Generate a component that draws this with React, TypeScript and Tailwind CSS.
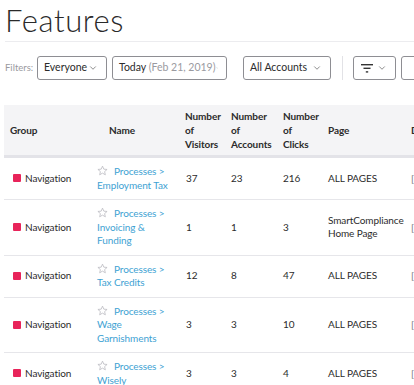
import React from 'react';
import { ChevronDown } from 'lucide-react';

type Row = {
  name: string[];
  visitors: string;
  accounts: string;
  clicks: string;
  page: string[];
};

const rows: Row[] = [
  { name: ['Employment Tax'], visitors: '37', accounts: '23', clicks: '216', page: ['ALL PAGES'] },
  { name: ['Invoicing &', 'Funding'], visitors: '1', accounts: '1', clicks: '3', page: ['SmartCompliance', 'Home Page'] },
  { name: ['Tax Credits'], visitors: '12', accounts: '8', clicks: '47', page: ['ALL PAGES'] },
  { name: ['Wage', 'Garnishments'], visitors: '3', accounts: '3', clicks: '10', page: ['ALL PAGES'] },
  { name: ['Wisely'], visitors: '3', accounts: '3', clicks: '4', page: ['ALL PAGES'] },
];

const Star = () => (
  <svg width="11" height="11" viewBox="0 0 24 24" className="inline-block align-[-1px] mr-[6px]">
    <path
      d="M12 2.5l2.9 6.6 7.1.6-5.4 4.7 1.6 7-6.2-3.7-6.2 3.7 1.6-7L2 9.7l7.1-.6z"
      fill="none"
      stroke="#b9b9c0"
      strokeWidth="1.7"
      strokeLinejoin="round"
    />
  </svg>
);

const Select = ({ children, width }: { children: React.ReactNode; width: string }) => (
  <div
    className={`flex items-center justify-between h-[24px] pl-[6px] pr-[8px] border border-[#8e8e93] rounded-[3px] text-[10.5px] text-[#2b2b2b] shrink-0 ${width}`}
  >
    <span>{children}</span>
    <ChevronDown size={10} strokeWidth={1.6} className="text-[#555]" />
  </div>
);

const App: React.FC = () => {
  return (
    <div
      className="w-[414px] h-[385px] overflow-hidden bg-white text-[#2b2b2b]"
      style={{ fontFamily: 'Lato, "Open Sans", sans-serif' }}
    >
      <div className="pl-[5px]">
        <h1 className="text-[31px] font-light leading-[38px] pt-[1px] text-[#2a2a2a] tracking-[0.6px]">Features</h1>
        <div className="h-px bg-[#ececef] mt-[2px]" />
        <div className="flex items-center mt-[14px] whitespace-nowrap">
          <span className="text-[9.5px] text-[#9a9aa0] w-[32px] shrink-0">Filters:</span>
          <Select width="w-[70px]">Everyone</Select>
          <div className="ml-[5px]">
            <Select width="w-[115px]">
              Today <span className="text-[#9a9aa0]">(Feb 21, 2019)</span>
            </Select>
          </div>
          <div className="ml-[16px]">
            <Select width="w-[88px]">All Accounts</Select>
          </div>
          <div className="w-px h-[24px] bg-[#e2e2e6] ml-[11px] mr-[10px] shrink-0" />
          <div className="flex items-center justify-between h-[24px] w-[43px] pl-[7px] pr-[8px] border border-[#8e8e93] rounded-[3px] shrink-0">
            <svg width="12" height="9" viewBox="0 0 12 9">
              <rect x="0" y="0" width="12" height="1.4" fill="#333" />
              <rect x="2.5" y="3.6" width="7" height="1.4" fill="#333" />
              <rect x="4.8" y="7.2" width="2.4" height="1.4" fill="#333" />
            </svg>
            <ChevronDown size={10} strokeWidth={1.6} className="text-[#555]" />
          </div>
          <div className="ml-[5px] h-[24px] w-[40px] border border-[#8e8e93] rounded-[3px] shrink-0" />
        </div>
      </div>

      <div className="pl-[4px] mt-[25px]">
        <table className="table-fixed border-collapse w-[520px] text-[10px] leading-[14px] tracking-[-0.1px]">
          <colgroup>
            <col className="w-[89px]" />
            <col className="w-[88px]" />
            <col className="w-[46px]" />
            <col className="w-[52px]" />
            <col className="w-[45px]" />
            <col className="w-[83px]" />
            <col />
          </colgroup>
          <thead>
            <tr className="bg-[#f4f4f6] border-b-[3px] border-[#e3e3e8] font-bold text-[#2b2b2b]">
              <th className="text-left align-middle py-[4px] pl-[6px]">Group</th>
              <th className="text-left align-middle py-[4px] pl-[16px]">Name</th>
              <th className="text-left align-middle py-[4px] pl-[4px] whitespace-nowrap">
                Number
                <br />
                of
                <br />
                Visitors
              </th>
              <th className="text-left align-middle py-[4px] pl-[4px] whitespace-nowrap">
                Number
                <br />
                of
                <br />
                Accounts
              </th>
              <th className="text-left align-middle py-[4px] pl-[4px] whitespace-nowrap">
                Number
                <br />
                of
                <br />
                Clicks
              </th>
              <th className="text-left align-middle py-[4px] pl-[4px]">Page</th>
              <th className="text-left align-middle py-[4px] pl-[4px] whitespace-nowrap">Date</th>
            </tr>
          </thead>
          <tbody>
            {rows.map((r, i) => (
              <tr key={i} className="border-b border-[#e6e6ea] text-[#2b2b2b] leading-[13.5px]">
                <td className="align-middle py-[7px] pl-[9px] whitespace-nowrap">
                  <span className="inline-block w-[8px] h-[8px] rounded-[1px] bg-[#e8245a] mr-[4px] align-[-0.5px]" />
                  Navigation
                </td>
                <td className="align-middle py-[7px] pl-[4px] whitespace-nowrap text-[#3ea2d3]">
                  <Star />
                  Processes &gt;
                  {r.name.map((n, j) => (
                    <React.Fragment key={j}>
                      <br />
                      {n}
                    </React.Fragment>
                  ))}
                </td>
                <td className="align-middle py-[7px] pl-[5px]">{r.visitors}</td>
                <td className="align-middle py-[7px] pl-[4px]">{r.accounts}</td>
                <td className="align-middle py-[7px] pl-[4px]">{r.clicks}</td>
                <td className="align-middle py-[7px] pl-[4px] whitespace-nowrap">
                  {r.page.map((p, j) => (
                    <React.Fragment key={j}>
                      {j > 0 && <br />}
                      {p}
                    </React.Fragment>
                  ))}
                </td>
                <td className="align-middle py-[7px] pl-[4px] text-[#777]">[</td>
              </tr>
            ))}
          </tbody>
        </table>
      </div>
    </div>
  );
};

export default App;
